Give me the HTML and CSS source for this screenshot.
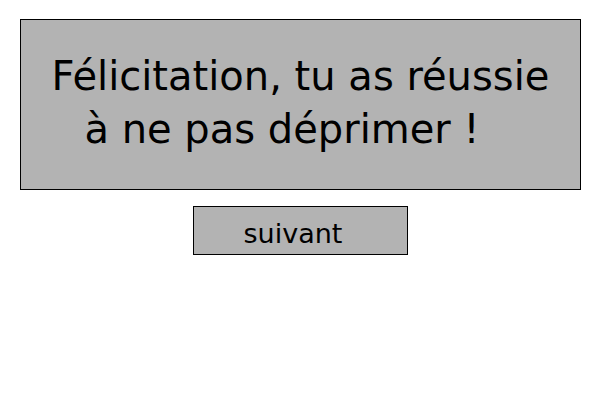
FILE: index.html
```html
<!DOCTYPE html>
<html lang="fr">
<head>
<meta charset="utf-8">
<link rel="stylesheet" href="styles.css">
</head>
<body>
<div class="page">
  <div class="message">
    <p class="line">Félicitation, tu as réussie</p>
    <p class="line line-second">à ne pas déprimer !</p>
  </div>
  <button class="next" type="button">suivant</button>
</div>
</body>
</html>
```
FILE: styles.css
```css
html, body {
  margin: 0;
  padding: 0;
  background: #ffffff;
}
.page {
  display: flex;
  flex-direction: column;
  align-items: center;
  padding-top: 19px;
  gap: 16px;
  font-family: "DejaVu Sans", sans-serif;
  color: #000;
}
.message {
  box-sizing: border-box;
  width: 561px;
  height: 171px;
  align-self: flex-start;
  margin-left: 20px;
  background: #b3b3b3;
  border: 1px solid #000;
  padding-top: 30px;
}
.line {
  margin: 0;
  font-size: 40px;
  line-height: 53px;
  text-align: center;
  white-space: nowrap;
}
.line-second {
  padding-right: 37px;
}
.next {
  box-sizing: border-box;
  width: 215px;
  height: 49px;
  background: #b3b3b3;
  border: 1px solid #000;
  border-radius: 0;
  font-family: "DejaVu Sans", sans-serif;
  font-size: 27px;
  color: #000;
  padding: 6px 14px 0 0;
  margin: 0;
}
```
